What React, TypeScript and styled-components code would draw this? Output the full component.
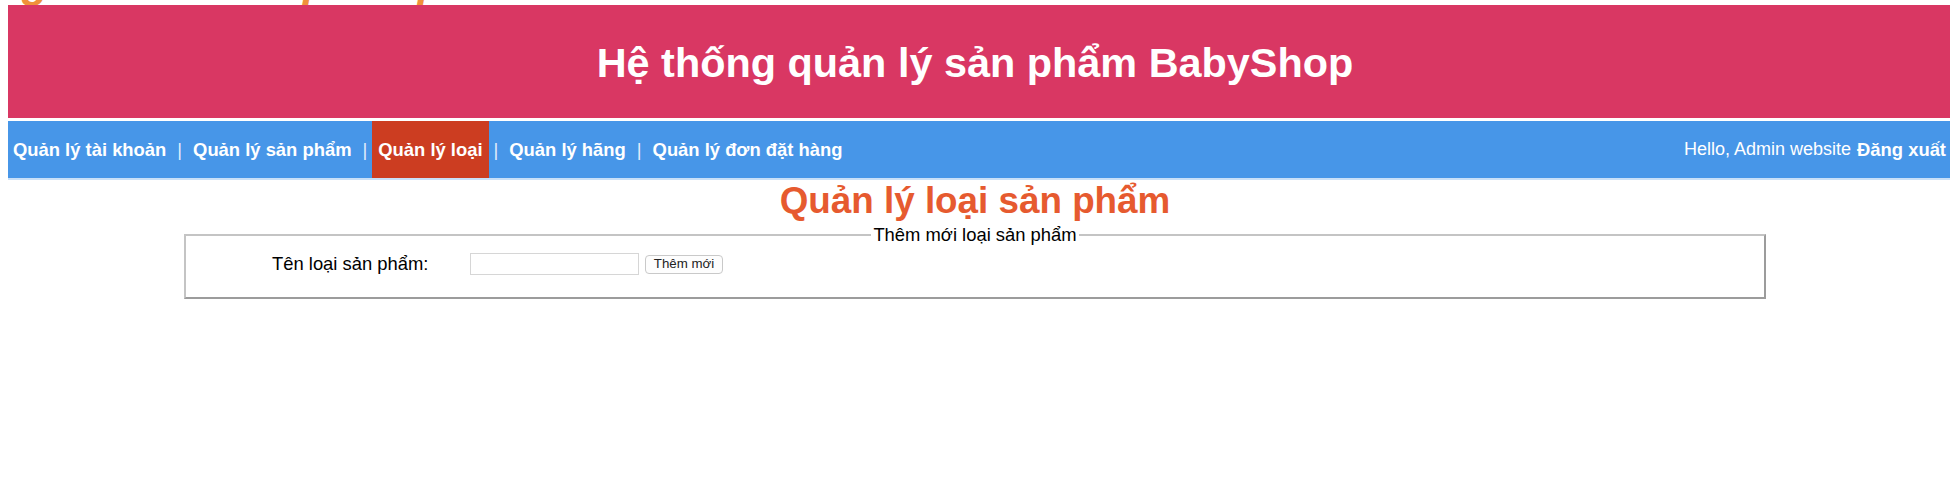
import React from "react";
import styled, { createGlobalStyle } from "styled-components";

const GlobalStyle = createGlobalStyle`
  html, body {
    margin: 0;
    padding: 0;
    background: #ffffff;
    overflow: hidden;
  }
  body {
    padding: 0 8px;
    font-family: "Liberation Sans", Arial, Helvetica, sans-serif;
    color: #000000;
  }
`;

const TopStrip = styled.div`
  height: 5px;
  overflow: hidden;
`;

const TopText = styled.div`
  display: flex;
  margin-top: -38px;
  height: 44px;
  font-size: 44px;
  line-height: 40px;
  font-style: italic;
  font-weight: bold;
  color: #f0913a;
  white-space: pre;
`;

const Glyph = styled.span<{ $offset: number }>`
  margin-left: ${(p) => p.$offset}px;
`;

const Header = styled.header`
  height: 113px;
  margin-right: -8px;
  background: #d93763;
  display: flex;
  align-items: center;
  justify-content: center;
  padding: 3px 8px 0 0;
  box-sizing: border-box;
`;

const SiteTitle = styled.div`
  font-size: 41.4px;
  font-weight: bold;
  color: #ffffff;
  line-height: normal;
`;

const Nav = styled.nav`
  margin: 3px -8px 0 0;
  padding-right: 4px;
  height: 57px;
  background: #4796e8;
  border-bottom: 2px solid #c9e0f8;
  display: flex;
  align-items: stretch;
  justify-content: space-between;
  color: #ffffff;
`;

const Menu = styled.ul`
  display: flex;
  align-items: stretch;
  list-style: none;
  margin: 0 0 0 -1px;
  padding: 0;
`;

const MenuItem = styled.li`
  display: flex;
  align-items: stretch;
`;

const MenuLink = styled.a<{ $active?: boolean }>`
  display: flex;
  align-items: center;
  padding: 0 6px;
  font-size: 18.4px;
  font-weight: bold;
  color: #ffffff;
  text-decoration: none;
  background: ${(p) => (p.$active ? "#cc3d21" : "transparent")};
`;

const Sep = styled.span`
  display: flex;
  align-items: center;
  padding: 0 5px;
  font-size: 18.4px;
  color: rgba(255, 255, 255, 0.85);
`;

const UserBox = styled.div`
  display: flex;
  align-items: center;
  gap: 6px;
  white-space: nowrap;
`;

const Greeting = styled.span`
  font-size: 18px;
  color: #ffffff;
`;

const Logout = styled.a`
  font-size: 18.4px;
  font-weight: bold;
  color: #ffffff;
  text-decoration: none;
`;

const PageTitle = styled.h1`
  margin: 0;
  text-align: center;
  font-size: 36.8px;
  font-weight: bold;
  line-height: normal;
  color: #e65a2f;
`;

const Box = styled.fieldset`
  width: 1582px;
  box-sizing: border-box;
  margin: 2px auto 0;
  border-style: solid;
  border-width: 2px;
  border-color: #c4c4c4 #9c9c9c #9c9c9c #c4c4c4;
  padding: 7px 14px 22px;
  min-width: 0;
`;

const Legend = styled.legend`
  margin-left: auto;
  margin-right: auto;
  padding: 0 2px;
  font-size: 18.4px;
  line-height: normal;
  color: #000000;
`;

const FormRow = styled.div`
  display: flex;
  align-items: center;
  height: 22px;
  padding-left: 72px;
`;

const Label = styled.label`
  font-size: 18.4px;
  color: #000000;
  width: 198px;
`;

const TextInput = styled.input`
  width: 169px;
  height: 22px;
  box-sizing: border-box;
  border: 1px solid #d6d6d6;
  padding: 0 4px;
  margin: 0;
  background: #ffffff;
  outline: none;
`;

const Button = styled.button`
  margin-left: 6px;
  width: 78px;
  height: 19px;
  box-sizing: border-box;
  padding: 0;
  border: 1px solid #c9c9c9;
  border-radius: 4px;
  background: #fdfdfd;
  font-family: "Liberation Sans", Arial, Helvetica, sans-serif;
  font-size: 13.3px;
  color: #222222;
  line-height: 1;
`;

const menu = [
  { label: "Quản lý tài khoản" },
  { label: "Quản lý sản phẩm" },
  { label: "Quản lý loại", active: true },
  { label: "Quản lý hãng" },
  { label: "Quản lý đơn đặt hàng" },
];

export default function App() {
  return (
    <>
      <GlobalStyle />
      <TopStrip>
        <TopText>
          <Glyph $offset={14}>g</Glyph>
          <Glyph $offset={254}>p</Glyph>
          <Glyph $offset={88}>p</Glyph>
        </TopText>
      </TopStrip>
      <Header>
        <SiteTitle>Hệ thống quản lý sản phẩm BabyShop</SiteTitle>
      </Header>
      <Nav>
        <Menu>
          {menu.map((m, i) => (
            <MenuItem key={m.label}>
              {i > 0 && <Sep>|</Sep>}
              <MenuLink href="#" $active={m.active}>
                {m.label}
              </MenuLink>
            </MenuItem>
          ))}
        </Menu>
        <UserBox>
          <Greeting>Hello, Admin website</Greeting>
          <Logout href="#">Đăng xuất</Logout>
        </UserBox>
      </Nav>
      <PageTitle>Quản lý loại sản phẩm</PageTitle>
      <Box>
        <Legend>Thêm mới loại sản phẩm</Legend>
        <FormRow>
          <Label htmlFor="ten-loai">Tên loại sản phẩm:</Label>
          <TextInput id="ten-loai" type="text" />
          <Button type="button">Thêm mới</Button>
        </FormRow>
      </Box>
    </>
  );
}
